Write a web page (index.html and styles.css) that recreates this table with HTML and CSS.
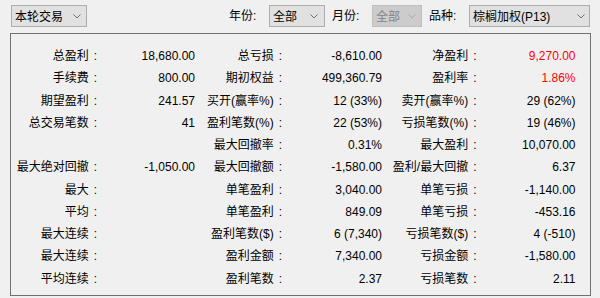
FILE: index.html
```html
<!DOCTYPE html>
<html lang="zh-CN">
<head>
<meta charset="utf-8">
<title>本轮交易</title>
<link rel="stylesheet" href="styles.css">
</head>
<body>
<div class="toolbar">
  <div class="combo w-round"><span class="combo-text">本轮交易</span><svg class="chev" width="8" height="5" viewBox="0 0 8 5"><polyline points="0.5,0.5 4,4 7.5,0.5"/></svg></div>
  <div class="filters">
    <span class="flabel">年份:</span>
    <div class="combo w-year"><span class="combo-text">全部</span><svg class="chev" width="8" height="5" viewBox="0 0 8 5"><polyline points="0.5,0.5 4,4 7.5,0.5"/></svg></div>
    <span class="flabel">月份:</span>
    <div class="combo w-month disabled"><span class="combo-text">全部</span><svg class="chev" width="8" height="5" viewBox="0 0 8 5"><polyline points="0.5,0.5 4,4 7.5,0.5"/></svg></div>
    <span class="flabel">品种:</span>
    <div class="combo w-prod"><span class="combo-text">棕榈加权(P13)</span><svg class="chev" width="8" height="5" viewBox="0 0 8 5"><polyline points="0.5,0.5 4,4 7.5,0.5"/></svg></div>
  </div>
</div>
<div class="panel">
  <div class="row"><span class="k">总盈利<span class="c">:</span></span><span class="v">18,680.00</span><span class="k">总亏损<span class="c">:</span></span><span class="v">-8,610.00</span><span class="k">净盈利<span class="c">:</span></span><span class="v red">9,270.00</span></div>
  <div class="row"><span class="k">手续费<span class="c">:</span></span><span class="v">800.00</span><span class="k">期初权益<span class="c">:</span></span><span class="v">499,360.79</span><span class="k">盈利率<span class="c">:</span></span><span class="v red">1.86%</span></div>
  <div class="row"><span class="k">期望盈利<span class="c">:</span></span><span class="v">241.57</span><span class="k">买开(赢率%)<span class="c">:</span></span><span class="v">12 (33%)</span><span class="k">卖开(赢率%)<span class="c">:</span></span><span class="v">29 (62%)</span></div>
  <div class="row"><span class="k">总交易笔数<span class="c">:</span></span><span class="v">41</span><span class="k">盈利笔数(%)<span class="c">:</span></span><span class="v">22 (53%)</span><span class="k">亏损笔数(%)<span class="c">:</span></span><span class="v">19 (46%)</span></div>
  <div class="row"><span class="k"></span><span class="v"></span><span class="k">最大回撤率<span class="c">:</span></span><span class="v">0.31%</span><span class="k">最大盈利<span class="c">:</span></span><span class="v">10,070.00</span></div>
  <div class="row"><span class="k">最大绝对回撤<span class="c">:</span></span><span class="v">-1,050.00</span><span class="k">最大回撤额<span class="c">:</span></span><span class="v">-1,580.00</span><span class="k">盈利/最大回撤<span class="c">:</span></span><span class="v">6.37</span></div>
  <div class="row"><span class="k">最大<span class="c">:</span></span><span class="v"></span><span class="k">单笔盈利<span class="c">:</span></span><span class="v">3,040.00</span><span class="k">单笔亏损<span class="c">:</span></span><span class="v">-1,140.00</span></div>
  <div class="row"><span class="k">平均<span class="c">:</span></span><span class="v"></span><span class="k">单笔盈利<span class="c">:</span></span><span class="v">849.09</span><span class="k">单笔亏损<span class="c">:</span></span><span class="v">-453.16</span></div>
  <div class="row"><span class="k">最大连续<span class="c">:</span></span><span class="v"></span><span class="k">盈利笔数($)<span class="c">:</span></span><span class="v">6 (7,340)</span><span class="k">亏损笔数($)<span class="c">:</span></span><span class="v">4 (-510)</span></div>
  <div class="row"><span class="k">最大连续<span class="c">:</span></span><span class="v"></span><span class="k">盈利金额<span class="c">:</span></span><span class="v">7,340.00</span><span class="k">亏损金额<span class="c">:</span></span><span class="v">-1,580.00</span></div>
  <div class="row"><span class="k">平均连续<span class="c">:</span></span><span class="v"></span><span class="k">盈利笔数<span class="c">:</span></span><span class="v">2.37</span><span class="k">亏损笔数<span class="c">:</span></span><span class="v">2.11</span></div>
</div>
</body>
</html>
```

FILE: styles.css
```css
html, body {
  margin: 0;
  padding: 0;
  background: #f0f0f0;
}
body {
  font-family: "Liberation Sans", "Noto Sans CJK SC", sans-serif;
  font-size: 12px;
  color: #000;
  width: 600px;
  height: 298px;
  overflow: hidden;
}
.toolbar {
  display: flex;
  justify-content: space-between;
  align-items: flex-start;
  padding: 5px 10px 0 11px;
  height: 22px;
}
.filters {
  display: flex;
  align-items: flex-start;
}
.flabel {
  width: 40px;
  line-height: 22px;
  white-space: nowrap;
}
.combo {
  box-sizing: border-box;
  height: 22px;
  border: 1px solid #adadad;
  background: #e1e1e1;
  display: flex;
  align-items: center;
  justify-content: space-between;
  padding: 1px 4px 0 3px;
  white-space: nowrap;
}
.combo-text {
  line-height: 20px;
}
.chev {
  display: block;
  flex: none;
}
.chev polyline {
  fill: none;
  stroke: #707070;
  stroke-width: 1;
}
.combo.disabled {
  background: #cccccc;
  border-color: #bfbfbf;
  color: #838383;
}
.combo.disabled .chev polyline {
  stroke: #a8a8a8;
}
.w-round { width: 76px; padding-right: 5px; }
.w-year { width: 56px; margin-right: 7px; padding-right: 6px; }
.w-month { width: 50px; margin-right: 7px; padding-right: 5px; }
.w-prod { width: 121px; }
.panel {
  box-sizing: border-box;
  margin: 6px 0 0 10px;
  width: 581px;
  height: 263px;
  border: 1px solid #707070;
  padding: 11px 0 5px 0;
}
.row {
  display: grid;
  grid-template-columns: 86px 98px 87px 100px 94.5px 99px;
  height: 22.27px;
  line-height: 22.27px;
}
.k, .v {
  text-align: right;
  white-space: nowrap;
}
.c {
  margin-left: 5px;
}
.red {
  color: #ff0000;
}
```
